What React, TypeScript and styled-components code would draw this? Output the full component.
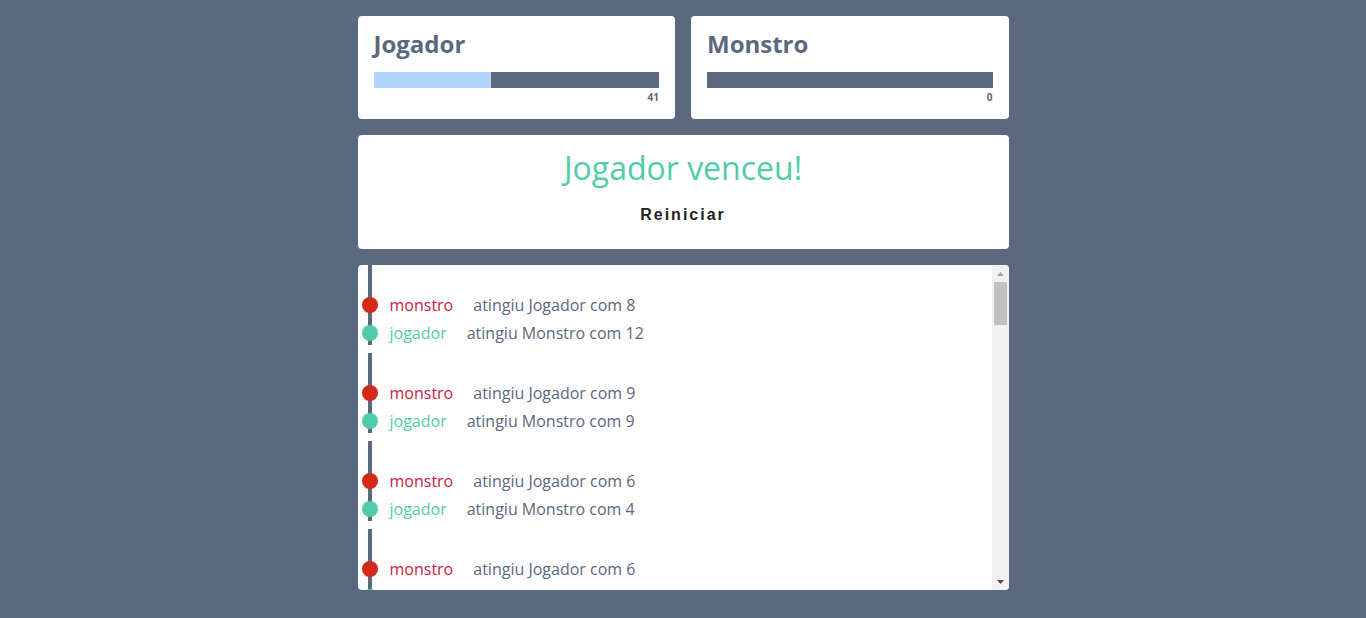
import React, { useLayoutEffect, useRef, useState } from "react";
import styled, { createGlobalStyle } from "styled-components";

const GlobalStyle = createGlobalStyle`
	html, body {
		margin: 0;
		padding: 0;
		background: #5a6880;
		font-family: "Open Sans", "Noto Sans", sans-serif;
	}
`;

const Page = styled.div`
	width: 651px;
	margin: 0 auto;
	padding-top: 16px;
	display: flex;
	flex-direction: column;
	gap: 16px;
`;

const Players = styled.div`
	display: grid;
	grid-template-columns: 1fr 1fr;
	gap: 16px;
`;

const Card = styled.div`
	background: #fff;
	border-radius: 4px;
	padding: 16px;
`;

const Name = styled.h1`
	margin: 0;
	font-size: 24px;
	line-height: 24px;
	font-weight: 700;
	color: #5a6880;
`;

const Bar = styled.div`
	margin-top: 16px;
	height: 16px;
	background: #5a6880;
	display: flex;
`;

const Fill = styled.div`
	height: 100%;
	background: #b3d4fc;
`;

const Points = styled.div`
	margin-top: 4px;
	font-size: 10px;
	line-height: 11px;
	font-weight: 700;
	text-align: right;
	color: #5a6880;
`;

const Result = styled(Card)`
	padding: 13px 16px 16px;
	display: flex;
	flex-direction: column;
	align-items: center;
`;

const Winner = styled.h2`
	margin: 0;
	font-size: 32px;
	line-height: 40px;
	font-weight: 400;
	color: #52cca8;
`;

const Restart = styled.button`
	margin-top: 9px;
	padding: 8px 16px;
	border: none;
	background: transparent;
	font-family: "Liberation Sans", Arial, sans-serif;
	font-size: 16px;
	line-height: 20px;
	font-weight: 700;
	letter-spacing: 2px;
	color: #222;
	cursor: pointer;
`;

const Log = styled.div`
	height: 325px;
	background: #fff;
	border-radius: 4px;
	display: flex;
	overflow: hidden;
`;

const List = styled.div`
	flex: 1;
	overflow-y: scroll;
	scrollbar-width: none;
`;

const Scroll = styled.div`
	width: 17px;
	flex-shrink: 0;
	background: #f1f1f1;
	display: flex;
	flex-direction: column;
`;

const Arrow = styled.div<{ $color: string }>`
	height: 17px;
	flex-shrink: 0;
	display: flex;
	align-items: center;
	justify-content: center;
	color: ${(p) => p.$color};
`;

const Track = styled.div`
	flex: 1;
	padding: 0 2px;
	overflow: hidden;
`;

const Thumb = styled.div`
	background: #c1c1c1;
`;

const Turn = styled.ul`
	list-style: none;
	margin: 0 0 8px 10px;
	padding: 28px 0 0;
	border-left: 4px solid #5a6880;
	display: flex;
	flex-direction: column;
	gap: 4px;
`;

const Entry = styled.li`
	display: flex;
	align-items: center;
	height: 24px;
	font-size: 16px;
	white-space: nowrap;
`;

const Dot = styled.span<{ $who: "monstro" | "jogador" }>`
	width: 16px;
	height: 16px;
	border-radius: 50%;
	margin-left: -10px;
	flex-shrink: 0;
	background: ${(p) => (p.$who === "monstro" ? "#d3281a" : "#52cca8")};
`;

const Who = styled.span<{ $who: "monstro" | "jogador" }>`
	margin-left: 12px;
	color: ${(p) => (p.$who === "monstro" ? "#c9203a" : "#52cca8")};
`;

const Msg = styled.span`
	margin-left: 20px;
	color: #5a6880;
`;

const turns: [number, number][] = [
	[8, 12], [9, 9], [6, 4], [6, 10], [7, 5], [9, 11], [5, 8],
	[10, 6], [7, 9], [8, 12], [6, 7], [9, 10], [5, 4], [8, 9],
	[10, 11], [6, 8], [7, 5], [9, 12], [4, 6], [8, 10], [5, 9],
	[7, 11], [6, 3], [9, 8], [5, 10],
];

const TRACK = 325 - 34;

export default function App() {
	const player = 41;
	const monster = 0;
	const listRef = useRef<HTMLDivElement>(null);
	const [thumb, setThumb] = useState({ top: 0, height: 43 });

	const update = () => {
		const el = listRef.current;
		if (!el) return;
		const ratio = el.clientHeight / el.scrollHeight;
		const height = Math.max(20, Math.round(TRACK * ratio));
		const max = el.scrollHeight - el.clientHeight;
		const top = max > 0 ? Math.round((el.scrollTop / max) * (TRACK - height)) : 0;
		setThumb({ top, height });
	};

	useLayoutEffect(update, []);

	return (
		<>
			<GlobalStyle />
			<Page>
				<Players>
					<Card>
						<Name>Jogador</Name>
						<Bar>
							<Fill style={{ width: `${player}%` }} />
						</Bar>
						<Points>{player}</Points>
					</Card>
					<Card>
						<Name>Monstro</Name>
						<Bar>
							<Fill style={{ width: `${monster}%` }} />
						</Bar>
						<Points>{monster}</Points>
					</Card>
				</Players>

				<Result>
					<Winner>Jogador venceu!</Winner>
					<Restart>Reiniciar</Restart>
				</Result>

				<Log>
					<List ref={listRef} onScroll={update}>
						{turns.map(([hit, taken], i) => (
							<Turn key={i}>
								<Entry>
									<Dot $who="monstro" />
									<Who $who="monstro">monstro</Who>
									<Msg>atingiu Jogador com {hit}</Msg>
								</Entry>
								<Entry>
									<Dot $who="jogador" />
									<Who $who="jogador">jogador</Who>
									<Msg>atingiu Monstro com {taken}</Msg>
								</Entry>
							</Turn>
						))}
					</List>
					<Scroll>
						<Arrow $color="#a3a3a3">
							<svg width="7" height="4" viewBox="0 0 7 4">
								<path d="M0 4h7L3.5 0z" fill="currentColor" />
							</svg>
						</Arrow>
						<Track>
							<Thumb style={{ marginTop: thumb.top, height: thumb.height }} />
						</Track>
						<Arrow $color="#505050">
							<svg width="7" height="4" viewBox="0 0 7 4">
								<path d="M0 0h7L3.5 4z" fill="currentColor" />
							</svg>
						</Arrow>
					</Scroll>
				</Log>
			</Page>
		</>
	);
}
